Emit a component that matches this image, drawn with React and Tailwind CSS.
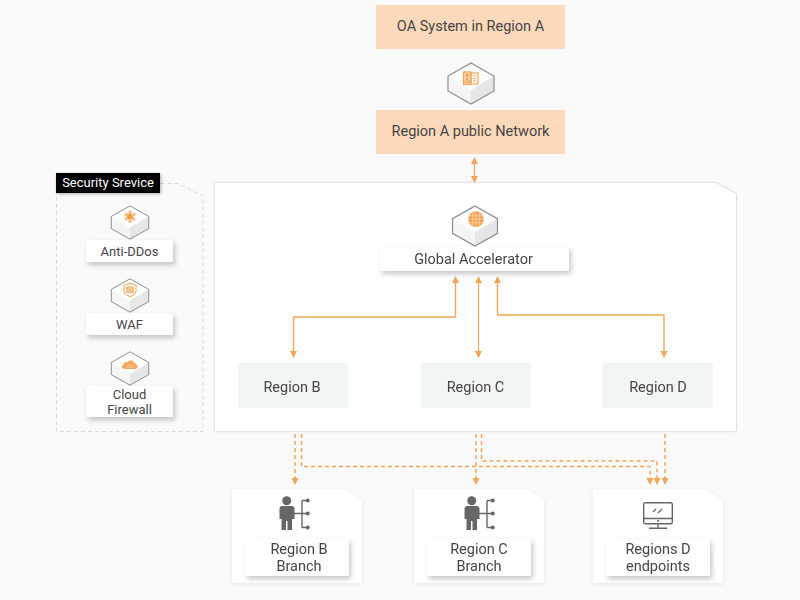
const orange = "#f4a55a";

const Cube = ({ className, children }) => (
  <svg viewBox="0 0 48 43" className={className}>
    <path d="M24 1 47 14 24 28 1 14Z" fill="#fff" />
    <path d="M1 14 24 28V42L1 29Z" fill="#f5f5f5" />
    <path d="M47 14 24 28V42L47 29Z" fill="#e6e6e6" />
    <path d="M24 1 47 14V29L24 42 1 29V14Z" fill="none" stroke="#8c8c8c" strokeWidth="1.2" />
    {children}
  </svg>
);

const IdIcon = () => (
  <g fill="none" stroke="#f4a55a" strokeWidth="1.2">
    <rect x="16.5" y="10" width="7.5" height="12.5" fill="#fbd5ac" />
    <rect x="24" y="11" width="7" height="11" />
    <circle cx="20.2" cy="13.2" r="1.2" fill="#f4a55a" />
    <path d="M18.2 20.5 20.2 16 22.2 20.5ZM26 14H29.5M26 16.5H29.5M26 19H29.5" />
  </g>
);

const SunIcon = () => (
  <g fill="#f7bd85">
    <circle cx="24" cy="9" r="2.2" />
    <circle cx="24" cy="20" r="2.2" />
    <circle cx="19.2" cy="11.8" r="2.2" />
    <circle cx="28.8" cy="11.8" r="2.2" />
    <circle cx="19.2" cy="17.2" r="2.2" />
    <circle cx="28.8" cy="17.2" r="2.2" />
    <circle cx="24" cy="14.5" r="3.6" fill="#f29c47" />
  </g>
);

const ShieldIcon = () => (
  <g>
    <path d="M24 6.5 31.5 9V15.5C31.5 19 28 21.5 24 23 20 21.5 16.5 19 16.5 15.5V9Z" fill="none" stroke="#f4a55a" strokeWidth="1.3" />
    <rect x="20" y="11" width="8" height="7" fill="#f8c594" stroke="#f4a55a" strokeWidth="1" />
  </g>
);

const CloudIcon = () => (
  <g>
    <path d="M17.5 22C13.5 22 13 17 16.5 16.2 17 13.8 19.5 13.2 21 14 22.5 11 27 11 28.5 14.2 30 14.2 31 15.2 31 16.5 34.5 17 34 22 30.5 22Z" fill="#f4a55a" />
    <path d="M19 18H29M19 20H29M21.5 16.5V21.5M24 16.5V21.5M26.5 16.5V21.5" stroke="#fff" strokeWidth="0.5" opacity="0.6" />
  </g>
);

const GlobeIcon = () => (
  <g>
    <circle cx="25" cy="14.5" r="8" fill="#f4a55a" />
    <path d="M17 11H33M17 14.5H33M17 18H33M21.5 7V22M25 6.5V22.5M28.5 7V22" stroke="#fbd9b6" strokeWidth="0.6" />
  </g>
);

const PersonIcon = () => (
  <svg viewBox="0 0 31 34" className="w-[31px] h-[34px]">
    <circle cx="7.7" cy="4.7" r="4.5" fill="#666" />
    <path d="M3.5 10H12.5C14.5 10 15.5 11 15.5 13V23H13V34H8.5V25H7V34H2.5V23H0.5V13C0.5 11 1.5 10 3.5 10Z" fill="#666" />
    <path d="M15 17.5H28M23 4.5V31.5M23 4.5H28M23 31.5H28" stroke="#666" strokeWidth="1.4" fill="none" />
    <circle cx="28.7" cy="4.5" r="2" fill="#666" />
    <circle cx="28.7" cy="17.5" r="2" fill="#666" />
    <circle cx="28.7" cy="31.5" r="2" fill="#666" />
  </svg>
);

const MonitorIcon = () => (
  <svg viewBox="0 0 30 27" className="w-[30px] h-[27px] mt-[6px]" fill="none" stroke="#666" strokeWidth="1.4">
    <rect x="0.7" y="0.7" width="28.6" height="21" rx="1.5" />
    <path d="M0.7 16.5H29.3M15 21.7V26M6 26.3H24M10 10 13 7M15 11 19 7" />
    <circle cx="15" cy="19" r="0.4" />
  </svg>
);

const Label = ({ className, children }) => (
  <div className={`flex items-center justify-center bg-white text-center shadow-[2px_3px_5px_rgba(0,0,0,0.22)] ${className}`}>
    {children}
  </div>
);

const Security = ({ icon, label, labelClass }) => (
  <div className="w-[87px] flex flex-col items-center">
    <Cube className="w-[40px] h-[35px]">{icon}</Cube>
    <Label className={`w-[87px] text-[13px] leading-[15px] ${labelClass}`}>{label}</Label>
  </div>
);

const Region = ({ className = "", children }) => (
  <div className={`w-[110px] h-[45px] flex items-center justify-center pt-[4px] bg-[#f1f5f5] text-[14.5px] ${className}`}>
    {children}
  </div>
);

const Branch = ({ className, iconClass, labelClass, icon, label }) => (
  <div className={`absolute top-[489px] w-[130px] h-[94px] drop-shadow-[0_1px_2px_rgba(0,0,0,0.08)] ${className}`}>
    <div className="h-full flex flex-col items-center pt-[7px] bg-white [clip-path:polygon(0_0,112px_0,130px_11px,130px_94px,0_94px)]">
      <div className={`h-[43px] flex items-start ${iconClass}`}>{icon}</div>
      <Label className={`w-[104px] h-[37px] text-[14.5px] leading-[17px] ${labelClass}`}>{label}</Label>
    </div>
  </div>
);

const Lines = () => (
  <svg width="800" height="600" className="absolute inset-0 pointer-events-none">
    <defs>
      <marker id="head" markerWidth="7" markerHeight="8" refX="5" refY="4" orient="auto-start-reverse" markerUnits="userSpaceOnUse">
        <path d="M0 0.5 7 4 0 7.5Z" fill={orange} />
      </marker>
    </defs>
    <g fill="none" stroke={orange}>
      <path d="M474.5 159V181" strokeWidth="1.2" markerStart="url(#head)" markerEnd="url(#head)" />
      <path d="M455.5 278V317H293.5V356" strokeWidth="1.4" markerStart="url(#head)" markerEnd="url(#head)" />
      <path d="M478.5 278V356" strokeWidth="1.2" markerStart="url(#head)" markerEnd="url(#head)" />
      <path d="M497.5 278V315H664V356" strokeWidth="1.4" markerStart="url(#head)" markerEnd="url(#head)" />
      <g strokeDasharray="4 3" strokeWidth="1.5">
        <path d="M295 434V483" markerEnd="url(#head)" />
        <path d="M301.5 434V466.5H650V483" markerEnd="url(#head)" />
        <path d="M476 434V483" markerEnd="url(#head)" />
        <path d="M481.5 434V461H657V483" markerEnd="url(#head)" />
        <path d="M665 434V483" markerEnd="url(#head)" />
      </g>
    </g>
  </svg>
);

export default function App() {
  return (
    <div className="relative w-[800px] h-[600px] overflow-hidden bg-[#fafafa] text-[#454545] font-['Roboto',sans-serif]">
      {/* top of the chain */}
      <div className="absolute left-[376px] top-[5px] w-[189px] flex flex-col items-center">
        <div className="w-full h-[44px] flex items-center justify-center bg-[#fdd9bb] text-[14.5px]">
          OA System in Region A
        </div>
        <Cube className="w-[48px] h-[43px] mt-[13px] mb-[5px]"><IdIcon /></Cube>
        <div className="w-full h-[44px] flex items-center justify-center bg-[#fdd9bb] text-[14.5px]">
          Region A public Network
        </div>
      </div>

      {/* security group */}
      <div className="absolute left-[56px] top-[183px] w-[148px] h-[249px]">
        <svg width="148" height="249" className="absolute inset-0">
          <path d="M104.5 0.5H122L147 13V248.5H0.5V0.5" fill="none" stroke="#d9d9d9" strokeDasharray="4 3" />
        </svg>
        <div className="absolute left-0 top-[-10px] w-[104px] h-[20px] flex items-center justify-center bg-black text-white text-[13px] shadow-[1px_1px_3px_rgba(0,0,0,0.3)]">
          Security Srevice
        </div>
        <div className="relative flex flex-col gap-[16px] pt-[22px] pl-[30px]">
          <Security icon={<SunIcon />} label="Anti-DDos" labelClass="h-[22px]" />
          <Security icon={<ShieldIcon />} label="WAF" labelClass="h-[22px]" />
          <Security icon={<CloudIcon />} label={<>Cloud<br />Firewall</>} labelClass="h-[31px]" />
        </div>
      </div>

      {/* main panel */}
      <div className="absolute left-[215px] top-[183px] w-[521px] h-[248px] drop-shadow-[0_0_1px_rgba(0,0,0,0.28)]">
        <div className="h-full flex flex-col items-center bg-white pt-[22px] [clip-path:polygon(0_0,501px_0,521px_11px,521px_248px,0_248px)]">
          <Cube className="w-[48px] h-[42px] mr-[2px]"><GlobeIcon /></Cube>
          <Label className="w-[189px] h-[24px] mr-[2px] pt-[2px] pr-[2px] text-[14.5px]">Global Accelerator</Label>
          <div className="w-full flex justify-between mt-[92px] pl-[23px] pr-[23px]">
            <Region className="pr-[2px]">Region B</Region>
            <Region>Region C</Region>
            <Region>Region D</Region>
          </div>
        </div>
      </div>

      <Branch className="left-[232px]" iconClass="mr-[5px]" labelClass="pl-[4px]" icon={<PersonIcon />} label={<>Region B<br />Branch</>} />
      <Branch className="left-[414px]" icon={<PersonIcon />} label={<>Region C<br />Branch</>} />
      <Branch className="left-[593px]" icon={<MonitorIcon />} label={<>Regions D<br />endpoints</>} />

      <Lines />
    </div>
  );
}
